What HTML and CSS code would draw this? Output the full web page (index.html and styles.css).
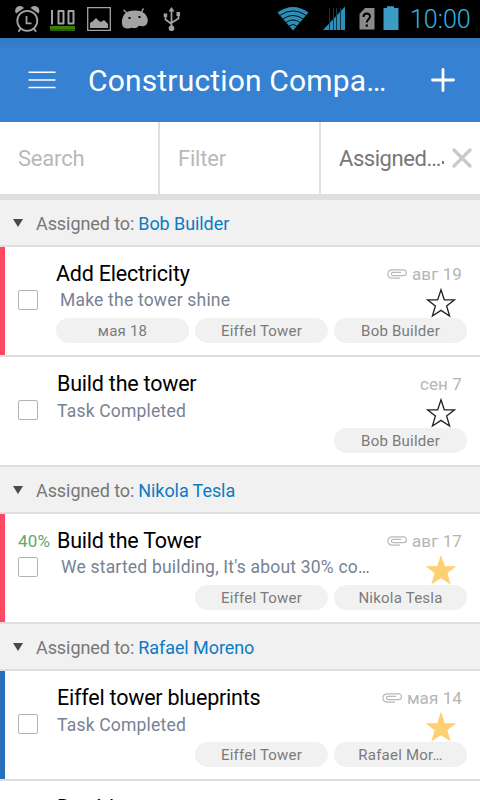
FILE: index.html
```html
<!DOCTYPE html>
<html lang="en">
<head>
    <meta charset="UTF-8">
    <meta name="viewport" content="width=device-width, initial-scale=1.0">
    <title>Tasks</title>
    <link rel="stylesheet" href="styles.css">
</head>
<body>
    <svg width="0" height="0" class="symbols">
        <symbol id="star" viewBox="0 0 30 30">
            <path d="M15 1.8 L18.3 11.800 H28.500 L20.6 18 L23.600 28 L15 22.400 L6.400 28 L9.400 18 L1.500 11.800 H11.7 Z"/>
        </symbol>
        <symbol id="clip" viewBox="0 0 20 12">
            <path d="M13 10.200H5a4.200 4.200 0 0 1 0-8.400h11.500a2.900 2.900 0 0 1 0 5.800H6a1.600 1.600 0 0 1 0-3.200h8"/>
        </symbol>
    </svg>
    <div class="status-bar">
        <svg class="status-icons" width="190" height="38" viewBox="0 0 190 38">
            <g fill="none" stroke="#a3a3a3" stroke-width="1.8">
                <circle cx="27.3" cy="20.8" r="10"/>
                <path d="M26.500 16v7.400h5M20.500 28.500l-2 3.200M34 28.500l2 3.200"/>
            </g>
            <path fill="#a3a3a3" d="M16 13.500a4.800 4.800 0 0 1 8-5.500zM38.500 13.500a4.800 4.800 0 0 0-8-5.500z"/>
            <path fill="none" stroke="#a3a3a3" stroke-width="2" stroke-linejoin="round" d="M52 10v14.500M58.500 11h5v12.500h-5zM68.500 11h5v12.500h-5z"/>
            <path fill="#3b7d0a" d="M50 26h25v5H50z"/>
            <path fill="#286006" d="M50 29h25v2H50z"/>
            <path fill="none" stroke="#a3a3a3" stroke-width="1.3" d="M87.700 7.700h22.600v22.600H87.700z"/>
            <path fill="#a3a3a3" d="M90 28v-5l3-2 3-3 3 3 2 1 3-2 4 4v4z"/>
            <path fill="#a3a3a3" d="M124.500 14c3-3 6-3.500 10-3.500s8 .5 11 4c3 4 3 8 .5 10.500-2.500 2-5.500 1-7 .7-2 2.500-5 3-7 2-4 1.500-7.500.7-9-1-2-4-1-9 1.500-12.700z"/>
            <path fill="none" stroke="#a3a3a3" stroke-width="1.500" d="M127 13l-3.500-3M141.500 12l2-3.500"/>
            <path fill="#000" d="M128.500 17h2v2h-2zM138.500 16h2v2h-2z"/>
            <path fill="none" stroke="#a3a3a3" stroke-width="1.700" d="M171.500 10v18M165.500 15v4.500l6 4.500M178.500 14v4.500l-6.500 4"/>
            <path fill="#a3a3a3" d="M171.500 7l3 4.500h-6zM163.700 13.500h3.500v3.500h-3.500zM176.500 12h3.500v4h-3.500z"/>
            <circle cx="171.500" cy="28.300" r="2.800" fill="#a3a3a3"/>
        </svg>
        <svg class="status-icons" width="130" height="38" viewBox="275 0 130 38">
            <path fill="#2b8fb7" d="M277.500 12.500Q293 1.500 308.500 12.500L293 30.500z"/>
            <path fill="none" stroke="#000" stroke-width=".9" d="M280 15.300Q293 6.500 306 15.300M283 18.900Q293 12 303 18.900M286 22.400Q293 17.600 300 22.400M289 26Q293 23 297 26"/>
            <path fill="#2b8fb7" d="M323 30L345 6.500V30z"/>
            <path stroke="#0b3a4d" stroke-width="1" d="M329.500 8v22M333.500 8v22M336.500 8v22M340.500 8v22"/>
            <path fill="#8a8a8a" d="M365 8h9.500v21.500H359.500V14z"/>
            <path fill="none" stroke="#000" stroke-width="2" d="M363.500 17c0-4.500 6.500-4.500 6.500-.5 0 3-3.200 2.500-3.200 6"/>
            <path fill="#000" d="M365.700 24.500h2.200v2.200h-2.200z"/>
            <path fill="#3d9cc6" d="M383.500 8H387V6.300h7V8h4.500v22h-15z"/>
        </svg>
        <span class="clock">10:00</span>
    </div>
    <div class="header">
        <svg width="28" height="18" viewBox="0 0 28 18">
            <path stroke="#fff" stroke-width="1.500" d="M.5 1.200h27M.5 9h27M.5 16.500h27"/>
        </svg>
        <h1>Construction Compa…</h1>
        <svg width="24" height="24" viewBox="0 0 24 24">
            <path stroke="#fff" stroke-width="2.800" stroke-linecap="round" d="M12 1.500v21M1.500 12h21"/>
        </svg>
    </div>
    <div class="filters">
        <div class="filter">Search</div>
        <div class="filter">Filter</div>
        <div class="filter active">
            <span>Assigned…</span><i></i>
            <svg width="20" height="20" viewBox="0 0 20 20">
                <path stroke="#c9c9c9" stroke-width="3.200" stroke-linecap="round" d="M2 2l16 16M18 2L2 18"/>
            </svg>
        </div>
    </div>

    <div class="group"><i class="arrow"></i>Assigned to:<b>Bob Builder</b></div>
    <div class="task red">
        <div class="left"><div class="percent"></div><div class="checkbox"></div></div>
        <div class="main">
            <div class="row title-row"><span class="title">Add Electricity</span><span class="date"><svg class="clip"><use href="#clip"/></svg>авг 19</span></div>
            <div class="row note-row"><span class="note indent">Make the tower shine</span><svg class="star"><use href="#star"/></svg></div>
            <div class="tags"><span>мая 18</span><span>Eiffel Tower</span><span>Bob Builder</span></div>
        </div>
    </div>
    <div class="task">
        <div class="left"><div class="percent"></div><div class="checkbox"></div></div>
        <div class="main">
            <div class="row title-row"><span class="title">Build the tower</span><span class="date">сен 7</span></div>
            <div class="row note-row"><span class="note">Task Completed</span><svg class="star"><use href="#star"/></svg></div>
            <div class="tags"><span>Bob Builder</span></div>
        </div>
    </div>

    <div class="group"><i class="arrow"></i>Assigned to:<b>Nikola Tesla</b></div>
    <div class="task red">
        <div class="left"><div class="percent">40%</div><div class="checkbox"></div></div>
        <div class="main">
            <div class="row title-row"><span class="title">Build the Tower</span><span class="date"><svg class="clip"><use href="#clip"/></svg>авг 17</span></div>
            <div class="row note-row"><span class="note indent">We started building, It's about 30% co…</span><svg class="star on"><use href="#star"/></svg></div>
            <div class="tags"><span>Eiffel Tower</span><span>Nikola Tesla</span></div>
        </div>
    </div>

    <div class="group"><i class="arrow"></i>Assigned to:<b>Rafael Moreno</b></div>
    <div class="task blue">
        <div class="left"><div class="percent"></div><div class="checkbox"></div></div>
        <div class="main">
            <div class="row title-row"><span class="title">Eiffel tower blueprints</span><span class="date"><svg class="clip"><use href="#clip"/></svg>мая 14</span></div>
            <div class="row note-row"><span class="note">Task Completed</span><svg class="star on"><use href="#star"/></svg></div>
            <div class="tags"><span>Eiffel Tower</span><span>Rafael Mor…</span></div>
        </div>
    </div>
    <div class="task last">
        <div class="left"></div>
        <div class="main">
            <div class="row title-row"><span class="title">Double</span></div>
        </div>
    </div>
</body>
</html>
```
FILE: styles.css
```css
* {
    box-sizing: border-box;
}
html {
    overflow: hidden;
}
body {
    display: flex;
    flex-direction: column;
    margin: 0;
    width: 480px;
    height: 800px;
    overflow: hidden;
    background-color: #fff;
    font-family: Roboto, sans-serif;
    white-space: nowrap;
}
body > div {
    flex: none;
}
svg {
    display: block;
    flex: none;
}
.symbols {
    display: none;
}
.status-bar {
    display: flex;
    height: 38px;
    background-color: #000;
}
.status-icons + .status-icons {
    margin-left: 85px;
}
.clock {
    margin-left: 5px;
    font-size: 25px;
    line-height: 40px;
    font-weight: 300;
    color: #33b5e5;
}
.header {
    display: flex;
    align-items: center;
    height: 84px;
    padding: 0 25px 0 28px;
    background: linear-gradient(#317ac6, #3681d2 12px);
    color: #fff;
}
.header h1 {
    flex: 1;
    margin: 0 0 0 32px;
    font-size: 30px;
    font-weight: 400;
    letter-spacing: 0.17px;
}
.filters {
    display: flex;
    height: 78px;
    border-bottom: 6px solid #dfdfdf;
}
.filter {
    width: 160px;
    padding-left: 18px;
    border-right: 2px solid #dfdfdf;
    font-size: 22px;
    line-height: 74px;
    letter-spacing: -0.2px;
    color: #b9b9b9;
}
.filter:nth-child(2) {
    width: 161px;
}
.filter.active {
    display: flex;
    align-items: center;
    width: 159px;
    padding-right: 8px;
    border-right: 0;
    letter-spacing: -0.45px;
    line-height: 76px;
    color: #777;
}
.filter.active span {
    padding-top: 2px;
}
.filter.active svg {
    margin-left: auto;
}
.filter.active i {
    width: 2px;
    height: 3px;
    margin: 8px 0 0 1px;
    background-color: #777;
}
.group {
    display: flex;
    align-items: center;
    height: 47px;
    padding: 2px 0 0 13px;
    border-bottom: 2px solid #dfdfdf;
    background-color: #f1f1f1;
    font-size: 18px;
    line-height: 24px;
    letter-spacing: -0.08px;
    color: #777;
}
.group b {
    margin-left: 4px;
    font-weight: 400;
    color: #0b7bc4;
}
.arrow {
    margin: -2px 13px 0 0;
    border: 5px solid transparent;
    border-top: 8px solid #4a4a4a;
    border-bottom: 0;
}
.task {
    display: flex;
    height: 110px;
    padding-left: 5px;
    border-bottom: 2px solid #dfdfdf;
}
.task.red {
    box-shadow: inset 5px 0 #ff4965;
}
.task.blue {
    box-shadow: inset 5px 0 #276fba;
}
.task.last {
    flex: 1 1 0;
    min-height: 0;
    border-bottom: 0;
}
.left {
    width: 52px;
    padding: 17px 0 0 13px;
}
.percent {
    height: 26px;
    font-size: 17px;
    line-height: 21px;
    letter-spacing: 0.2px;
    color: #61a96b;
}
.checkbox {
    width: 20px;
    height: 20px;
    border: 1px solid #b3b3b3;
    border-radius: 2px;
}
.main {
    flex: 1;
    padding: 13px 13px 0 0;
}
.row {
    display: flex;
    justify-content: space-between;
}
.title-row {
    height: 28px;
}
.title {
    font-size: 21.5px;
    line-height: 28px;
    letter-spacing: -0.22px;
    color: #000;
}
.last .title {
    font-size: 21px;
    line-height: 26px;
    letter-spacing: 0.7px;
}
.date {
    display: flex;
    align-items: center;
    padding-right: 5px;
    font-size: 17px;
    letter-spacing: 0.1px;
    color: #b5b5b5;
}
.clip {
    width: 20px;
    height: 12px;
    margin-right: 5px;
    fill: none;
    stroke: #b9b9b9;
    stroke-width: 1.2;
}
.note-row {
    height: 30px;
}
.note {
    font-size: 17.5px;
    line-height: 27px;
    letter-spacing: 0.2px;
    color: #778294;
}
.note.indent {
    padding-left: 4px;
    line-height: 25px;
}
.star {
    width: 30px;
    height: 30px;
    margin-right: 11px;
    fill: none;
    stroke: #222;
    stroke-width: 1.3;
}
.star.on {
    fill: #ffd072;
    stroke: #ffd072;
}
.tags {
    display: flex;
    justify-content: flex-end;
    gap: 6px;
}
.tags span {
    width: 133px;
    height: 25px;
    border-radius: 13px;
    background-color: #f1f1f1;
    font-size: 15px;
    line-height: 26px;
    letter-spacing: 0.22px;
    text-align: center;
    color: #7b7b7b;
}
```
